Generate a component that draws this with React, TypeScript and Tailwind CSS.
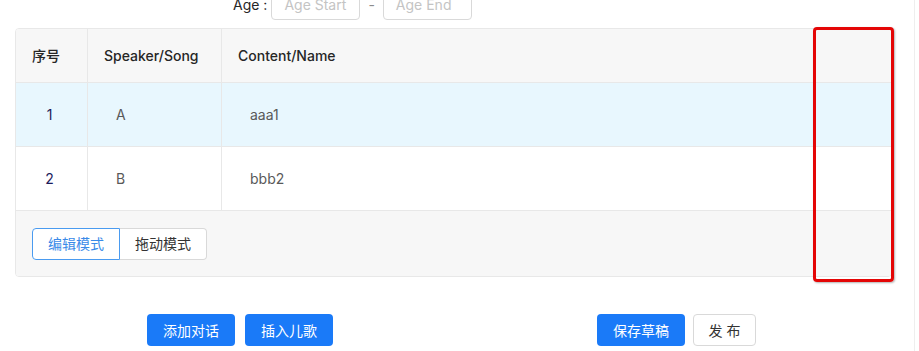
import React from 'react';

const rows = [
    { id: 1, speaker: 'A', content: 'aaa1', active: true },
    { id: 2, speaker: 'B', content: 'bbb2', active: false },
];

export default function App() {
    return (
        <div
            className="relative w-[919px] h-[351px] overflow-hidden bg-white text-[14px] text-[#595959]"
            style={{ fontFamily: 'Inter, "Noto Sans CJK SC", sans-serif' }}
        >
            {/* age filter, cut off at the top */}
            <div className="flex items-center h-[32px] mt-[-12px] ml-[233px]">
                <span className="text-[#262626] mr-[4px]">Age :</span>
                <div className="w-[89px] h-[32px] border border-[#d9d9d9] rounded-[4px] px-[12px] flex items-center text-[#c4c4c4]">
                    Age Start
                </div>
                <span className="mx-[8px] text-[#8c8c8c]">-</span>
                <div className="w-[89px] h-[32px] border border-[#d9d9d9] rounded-[4px] px-[12px] flex items-center text-[#c4c4c4]">
                    Age End
                </div>
            </div>

            {/* table */}
            <div className="mt-[8px] ml-[15px] w-[877px] border border-[#e8e8e8] rounded-[4px] overflow-hidden">
                <div className="flex h-[54px] bg-[#f7f7f7] border-b border-[#e8e8e8] text-[#262626] font-medium">
                    <div className="w-[72px] flex items-center pl-[16px] border-r border-[#e8e8e8]">序号</div>
                    <div className="w-[134px] flex items-center pl-[16px] border-r border-[#e8e8e8]">Speaker/Song</div>
                    <div className="flex-1 flex items-center pl-[16px]">Content/Name</div>
                </div>
                {rows.map((row) => (
                    <div
                        key={row.id}
                        className={`flex h-[64px] border-b border-[#e8e8e8] ${row.active ? 'bg-[#e8f7fe]' : 'bg-white'}`}
                    >
                        <div className="w-[72px] flex items-center justify-center pr-[4px] text-[#1c1c5c] border-r border-[#e8e8e8]">
                            {row.id}
                        </div>
                        <div className="w-[134px] flex items-center pl-[28px] border-r border-[#e8e8e8]">{row.speaker}</div>
                        <div className="flex-1 flex items-center pl-[28px]">{row.content}</div>
                    </div>
                ))}
                <div className="h-[65px] bg-[#f7f7f7] flex items-center pl-[16px]">
                    <div className="flex h-[32px] rounded-[4px] bg-white">
                        <button className="w-[88px] h-full border border-[#4a9bf0] rounded-l-[4px] text-[#3a8ae8]">
                            编辑模式
                        </button>
                        <button className="w-[87px] h-full border border-l-0 border-[#d9d9d9] rounded-r-[4px] text-[#333]">
                            拖动模式
                        </button>
                    </div>
                </div>
            </div>

            {/* actions */}
            <div className="flex mt-[37px] h-[32px]">
                <div className="flex gap-[10px] ml-[147px]">
                    <button className="w-[88px] h-[32px] rounded-[4px] bg-[#1a7af8] text-white">添加对话</button>
                    <button className="w-[88px] h-[32px] rounded-[4px] bg-[#1a7af8] text-white">插入儿歌</button>
                </div>
                <div className="flex gap-[8px] ml-[264px]">
                    <button className="w-[88px] h-[32px] rounded-[4px] bg-[#1a7af8] text-white">保存草稿</button>
                    <button className="w-[63px] h-[32px] rounded-[4px] border border-[#d9d9d9] bg-white text-[#333] tracking-[4px] pl-[4px]">
                        发布
                    </button>
                </div>
            </div>

            {/* page edge line */}
            <div className="absolute top-0 right-[4px] w-px h-full bg-[#eeeeee]" />

            {/* red annotation box */}
            <div className="absolute left-[813px] top-[27px] w-[81px] h-[255px] border-[3px] border-[#e40606] rounded-[4px] shadow-[1px_1px_2px_rgba(0,0,0,0.3)]" />
        </div>
    );
}
